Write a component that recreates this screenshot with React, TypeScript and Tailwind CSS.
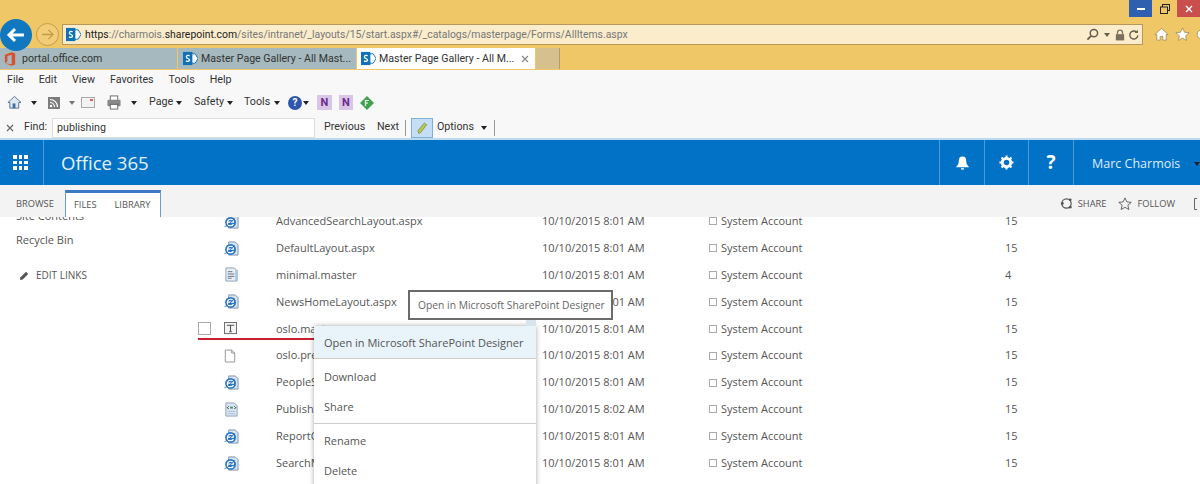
import React from "react";

const font = "font-['Open_Sans','Noto_Sans',sans-serif]";
const chrome = "font-['Roboto','Open_Sans',sans-serif]";

function SpLogo({ className = "" }: { className?: string }) {
  return (
    <svg viewBox="0 0 16 16" className={"w-[15px] h-[15px] shrink-0 " + className}>
      <path d="M8 3h5l3 5-3 5H8z" fill="#fff" stroke="#0f72b8" strokeWidth="1" />
      <rect x="0" y="1" width="10" height="14" fill="#0f72b8" />
      <path d="M7 5.2C6 4.4 3.6 4.5 3.6 6.3c0 2 3.4 1.4 3.4 3.3 0 1.6-2.5 1.7-3.7.9" fill="none" stroke="#fff" strokeWidth="1.4" />
    </svg>
  );
}

function IeDoc() {
  return (
    <svg viewBox="0 0 16 16" className="w-[15px] h-[15px]">
      <path d="M5 1h7l3 3v11H5z" fill="#d5e3f3" stroke="#7f93ab" strokeWidth="1" />
      <circle cx="7" cy="9" r="5.800" fill="#2b78c2" />
      <path d="M3.600 8.600h6.400c0-2-1.200-3-3-3-1.900 0-3.400 1.400-3.400 3.600 0 2.100 1.500 3.300 3.400 3.300 1.400 0 2.500-.6 3-1.700" fill="none" stroke="#fff" strokeWidth="1.300" />
      <path d="M.5 13.500c2-.2 7-3.900 10.500-9" fill="none" stroke="#1c5a9e" strokeWidth=".8" />
    </svg>
  );
}

function MasterDoc() {
  return (
    <svg viewBox="0 0 16 16" className="w-[15px] h-[15px]">
      <path d="M2 1h9l3 3v11H2z" fill="#e7eef7" stroke="#8ea0b5" strokeWidth="1" />
      <path d="M4 5h5M4 7.500h7M4 10h7M4 12h4" stroke="#5f6f82" strokeWidth="1" />
      <rect x="12" y="3" width="2.500" height="12" fill="#a9c5e4" />
    </svg>
  );
}

function OsloIcon() {
  return (
    <svg viewBox="0 0 14 14" className="w-[13px] h-[13px]">
      <rect x=".5" y=".5" width="13" height="12" fill="#f4f4f4" stroke="#666" strokeWidth="1" />
      <path d="M3 3.500h8M7 3.500v7" stroke="#555" strokeWidth="1.200" />
      <path d="M5.500 10.500h3" stroke="#555" strokeWidth="1" />
    </svg>
  );
}

function BlankDoc() {
  return (
    <svg viewBox="0 0 14 16" className="w-[12px] h-[14px]">
      <path d="M1.500 1h7.500l3.500 3.500V15h-11z" fill="#fff" stroke="#888" strokeWidth="1" />
      <path d="M9 1v3.500h3.500" fill="none" stroke="#888" strokeWidth="1" />
    </svg>
  );
}

function CodeDoc() {
  return (
    <svg viewBox="0 0 16 16" className="w-[15px] h-[15px]">
      <path d="M2 1h9l3 3v11H2z" fill="#dbe6f4" stroke="#8ea0b5" strokeWidth="1" />
      <path d="M5 4.500L3.500 6 5 7.500M11 4.500l1.500 1.500L11 7.500" fill="none" stroke="#333" strokeWidth="1" />
      <rect x="6.500" y="5" width="3" height="2" fill="#3d9a6b" />
      <path d="M4 10h8M4 12.500h8" stroke="#a9bcd3" strokeWidth="1" />
    </svg>
  );
}

function Caret({ className = "" }: { className?: string }) {
  return <span className={"inline-block w-0 h-0 border-x-[3.500px] border-x-transparent border-t-[4px] border-t-[#222] " + className} />;
}

const rows: { icon: React.ReactNode; name: string; date: string; v: string; check?: boolean }[] = [
  { icon: <IeDoc />, name: "AdvancedSearchLayout.aspx", date: "10/10/2015 8:01 AM", v: "15" },
  { icon: <IeDoc />, name: "DefaultLayout.aspx", date: "10/10/2015 8:01 AM", v: "15" },
  { icon: <MasterDoc />, name: "minimal.master", date: "10/10/2015 8:01 AM", v: "4" },
  { icon: <IeDoc />, name: "NewsHomeLayout.aspx", date: "10/10/2015 8:01 AM", v: "15" },
  { icon: <OsloIcon />, name: "oslo.master", date: "10/10/2015 8:01 AM", v: "15", check: true },
  { icon: <BlankDoc />, name: "oslo.preview", date: "10/10/2015 8:01 AM", v: "15" },
  { icon: <IeDoc />, name: "PeopleSearch.aspx", date: "10/10/2015 8:01 AM", v: "15" },
  { icon: <CodeDoc />, name: "Publishing.aspx", date: "10/10/2015 8:02 AM", v: "15" },
  { icon: <IeDoc />, name: "ReportCenter.aspx", date: "10/10/2015 8:01 AM", v: "15" },
  { icon: <IeDoc />, name: "SearchMain.aspx", date: "10/10/2015 8:01 AM", v: "15" },
];

function Tab({ w, bg, children }: { w: string; bg: string; children: React.ReactNode }) {
  return <div className={`${w} ${bg} h-[21px] flex items-center shrink-0 overflow-hidden`}>{children}</div>;
}

export default function App() {
  return (
    <div className={"relative w-[1200px] h-[484px] overflow-hidden bg-white flex flex-col text-[#555] " + font}>
      {/* Browser title region */}
      <div className={"h-[70px] bg-[#f0c766] relative shrink-0 " + chrome}>
        <div className="flex justify-end h-[17px]">
          <div className="w-[23px] h-[17px] bg-[#2f5fb0] flex items-center justify-center">
            <div className="w-[8px] h-[2px] bg-white" />
          </div>
          <div className="w-[25px] h-[17px] flex items-center justify-center">
            <svg viewBox="0 0 10 10" className="w-[10px] h-[10px]">
              <rect x="2.500" y=".5" width="7" height="6" fill="none" stroke="#222" />
              <rect x=".5" y="3" width="7" height="6.500" fill="#f0c766" stroke="#222" />
            </svg>
          </div>
          <div className="w-[23px] h-[17px] bg-[#c94f4f] flex items-center justify-center">
            <svg viewBox="0 0 8 8" className="w-[8px] h-[8px]"><path d="M1 1l6 6M7 1L1 7" stroke="#fff" strokeWidth="1.400" /></svg>
          </div>
        </div>
        <div className="flex items-center h-[21px] mt-[7px]">
          <div className="w-[62px] shrink-0" />
          <div className="w-[1081px] h-[21px] bg-[#fbeccb] border border-[#b9975a] flex items-center pl-[3px] pr-[2px] shrink-0">
            <SpLogo className="mr-[4px]" />
            <span className="text-[10.400px] text-[#777] whitespace-nowrap pt-[1px]">
              <span className="text-[#222]">https</span>://charmois.<span className="text-[#222]">sharepoint.com</span>/sites/intranet/_layouts/15/start.aspx#/_catalogs/masterpage/Forms/AllItems.aspx
            </span>
            <div className="ml-auto flex items-center gap-[3px]">
              <svg viewBox="0 0 14 14" className="w-[13px] h-[13px]">
                <circle cx="8.500" cy="5.500" r="4" fill="none" stroke="#665f4f" strokeWidth="1.600" />
                <path d="M5.500 8.500L1.500 12.500" stroke="#665f4f" strokeWidth="2" />
              </svg>
              <Caret className="mx-[2px] border-t-[#665f4f]" />
              <svg viewBox="0 0 12 14" className="w-[10px] h-[12px]">
                <path d="M3 6V4a3 3 0 0 1 6 0v2" fill="none" stroke="#7a705c" strokeWidth="1.500" />
                <rect x="1" y="6" width="10" height="7.500" fill="#7a705c" />
              </svg>
              <svg viewBox="0 0 14 14" className="w-[12px] h-[12px]">
                <path d="M11.500 7.500a4.700 4.700 0 1 1-1.500-4" fill="none" stroke="#665f4f" strokeWidth="1.600" />
                <path d="M11.500 .8v4h-4z" fill="#665f4f" />
              </svg>
            </div>
          </div>
          <div className="ml-[11px] flex items-center gap-[6px]">
            <svg viewBox="0 0 16 16" className="w-[15px] h-[15px]">
              <path d="M8 1.500L1 8h2v6h3.500v-4h3v4H13V8h2z" fill="#fff" stroke="#8a7a52" strokeWidth=".7" />
            </svg>
            <svg viewBox="0 0 16 16" className="w-[15px] h-[15px]">
              <path d="M8 1l2.100 4.600 5 .5-3.800 3.300 1.100 4.900L8 11.800l-4.400 2.500 1.100-4.900L.9 6.100l5-.5z" fill="#fff" stroke="#8a7a52" strokeWidth=".7" />
            </svg>
            <svg viewBox="0 0 8 16" className="w-[8px] h-[15px]">
              <circle cx="6" cy="8" r="5" fill="#fff" stroke="#8a7a52" strokeWidth=".7" />
            </svg>
          </div>
        </div>
        <div className="flex items-end gap-[1px] h-[21px] mt-[3px] text-[10.600px] whitespace-nowrap">
          <Tab w="w-[177px]" bg="bg-[#a5b9be]">
            <svg viewBox="0 0 14 16" className="w-[12px] h-[14px] ml-[4px] mr-[6px] shrink-0">
              <path d="M1 3l8-3 4 1.500v13L9 16l-8-3 8 1V3L4 4.500V11l-3 2z" fill="#d9502a" />
            </svg>
            <span className="text-[#333] pt-[1px]">portal.office.com</span>
          </Tab>
          <Tab w="w-[178px]" bg="bg-[#a5b9be]">
            <SpLogo className="ml-[5px] mr-[3px]" />
            <span className="text-[#333] pt-[1px]">Master Page Gallery - All Mast...</span>
          </Tab>
          <Tab w="w-[178px]" bg="bg-white">
            <SpLogo className="ml-[4px] mr-[3px]" />
            <span className="text-[#333] pt-[1px]">Master Page Gallery - All M...</span>
            <svg viewBox="0 0 8 8" className="w-[8px] h-[8px] ml-auto mr-[6px]"><path d="M1 1l6 6M7 1L1 7" stroke="#888" strokeWidth="1.200" /></svg>
          </Tab>
          <div className="w-[24px] h-[21px] bg-[#d6c08e] border-r border-[#b39c62]" />
        </div>

        {/* Back / forward buttons lie over the address row */}
        <div className="absolute left-0 top-[19px] w-[32px] h-[32px] rounded-full bg-[#0f78c0] flex items-center justify-center">
          <svg viewBox="0 0 20 16" className="w-[20px] h-[16px]">
            <path d="M9 2L3 8l6 6M3 8h15" fill="none" stroke="#fff" strokeWidth="3" />
          </svg>
        </div>
        <div className="absolute left-[36px] top-[23px] w-[23px] h-[23px] rounded-full border border-[#c49a52] bg-[#f3cd75] flex items-center justify-center">
          <svg viewBox="0 0 14 12" className="w-[13px] h-[11px]">
            <path d="M8 1l5 5-5 5M13 6H1" fill="none" stroke="#c49a52" strokeWidth="1.400" />
          </svg>
        </div>
      </div>

      {/* Menu / command / find */}
      <div className={"h-[70px] bg-[#f8f8f8] border-b-2 border-[#bcd9ee] shrink-0 text-[10.700px] text-[#333] flex flex-col " + chrome}>
        <div className="flex gap-[15px] pl-[7px] h-[20px] items-center">
          {["File", "Edit", "View", "Favorites", "Tools", "Help"].map((m) => (
            <span key={m}>{m}</span>
          ))}
        </div>
        <div className="flex items-center h-[25px] pl-[7px]">
          <svg viewBox="0 0 16 16" className="w-[15px] h-[15px]">
            <path d="M8 1.500L1 8h2v6h9.500V8H15z" fill="#dfe7f1" stroke="#56708f" />
            <rect x="6" y="9" width="3" height="5" fill="#3d6fa8" />
          </svg>
          <Caret className="ml-[9px]" />
          <svg viewBox="0 0 12 12" className="w-[12px] h-[12px] ml-[11px]">
            <rect width="12" height="12" fill="#7d7d7d" />
            <circle cx="3" cy="9" r="1.200" fill="#fff" />
            <path d="M2 5.500a4.500 4.500 0 0 1 4.500 4.500M2 2.500A7.500 7.500 0 0 1 9.500 10" fill="none" stroke="#fff" strokeWidth="1.200" />
          </svg>
          <Caret className="ml-[9px] border-t-[#777]" />
          <svg viewBox="0 0 14 11" className="w-[14px] h-[11px] ml-[6px]">
            <rect x=".5" y=".5" width="13" height="10" fill="#f2f2f2" stroke="#aaa" />
            <rect x="9" y="2" width="3" height="2" fill="#d06a5c" />
          </svg>
          <svg viewBox="0 0 16 16" className="w-[16px] h-[15px] ml-[11px]">
            <rect x="4" y="1" width="8" height="5" fill="#fff" stroke="#666" />
            <rect x="1" y="5" width="14" height="7" rx="1" fill="#888" />
            <rect x="4" y="10" width="8" height="5" fill="#fff" stroke="#666" />
          </svg>
          <Caret className="ml-[9px]" />
          <span className="ml-[12px] w-[26px]">Page</span>
          <Caret className="ml-[1px]" />
          <span className="ml-[12px] w-[32px]">Safety</span>
          <Caret className="ml-[1px]" />
          <span className="ml-[11px] w-[27px]">Tools</span>
          <Caret className="ml-[3px]" />
          <span className="ml-[8px] w-[14px] h-[14px] rounded-full bg-[#2f56ac] text-white text-[10px] leading-[14px] text-center font-bold">?</span>
          <Caret className="ml-[1px]" />
          <span className="ml-[8px] w-[15px] h-[15px] bg-[#d9c5e6] text-[#6b2a8a] text-[11px] leading-[15px] text-center font-bold">N</span>
          <span className="ml-[7px] w-[14px] h-[15px] bg-[#d9c5e6] text-[#6b2a8a] text-[11px] leading-[15px] text-center font-bold">N</span>
          <svg viewBox="0 0 14 14" className="w-[14px] h-[14px] ml-[7px]">
            <path d="M7 0l7 7-7 7-7-7z" fill="#3fa34d" />
            <path d="M5.500 10V4.500h3.500M5.500 7h2.500" fill="none" stroke="#fff" strokeWidth="1.200" />
          </svg>
        </div>
        <div className="flex items-center h-[21px] pl-[6px] mt-[2px]">
          <svg viewBox="0 0 8 8" className="w-[8px] h-[8px]"><path d="M1 1l6 6M7 1L1 7" stroke="#666" strokeWidth="1.200" /></svg>
          <span className="w-[28px] ml-[10px]">Find:</span>
          <div className="w-[263px] h-[20px] bg-white border border-[#ddd] pl-[4px] leading-[18px]">publishing</div>
          <span className="ml-[9px] w-[42px]">Previous</span>
          <span className="ml-[11px] w-[22px]">Next</span>
          <div className="w-px h-[16px] bg-[#999] ml-[6px]" />
          <div className="w-[22px] h-[20px] bg-[#c5def5] border border-[#7fb0d8] ml-[5px] flex items-center justify-center">
            <svg viewBox="0 0 14 14" className="w-[13px] h-[14px]">
              <path d="M3 13l-1-3L9 1.500l2.500 2L5 12z" fill="#b4c94f" stroke="#77823a" strokeWidth=".7" />
            </svg>
          </div>
          <span className="ml-[4px] w-[40px]">Options</span>
          <Caret className="ml-[4px]" />
          <div className="w-px h-[16px] bg-[#999] ml-[7px]" />
        </div>
      </div>

      {/* Office 365 bar */}
      <div className="h-[45px] bg-[#0272c6] shrink-0 flex items-stretch text-white">
        <div className="w-[44px] border-r border-[#4c9bd8] flex items-center justify-center">
          <div className="grid grid-cols-3 gap-[2px] ml-[-2px]">
            {Array.from({ length: 9 }).map((_, i) => (
              <div key={i} className="w-[3.500px] h-[3.500px] bg-white" />
            ))}
          </div>
        </div>
        <div className="pl-[17px] text-[18.600px] leading-[45px] text-[#e4f1fb]">Office 365</div>
        <div className="ml-auto flex items-stretch">
          <div className="w-[45px] border-l border-[#4c9bd8] flex items-center justify-center">
            <svg viewBox="0 0 16 16" className="w-[15px] h-[16px]">
              <path d="M8 1c-3 0-4 2-4 5 0 3-1 4-2.500 5.500v1h13v-1C13 10 12 9 12 6c0-3-1-5-4-5z" fill="#fff" />
              <path d="M6.500 13.500h3v1.500h-3z" fill="#fff" />
            </svg>
          </div>
          <div className="w-[44px] border-l border-[#4c9bd8] flex items-center justify-center">
            <svg viewBox="0 0 16 16" className="w-[15px] h-[15px]">
              <circle cx="8" cy="8" r="4.500" fill="none" stroke="#fff" strokeWidth="3" />
              <path d="M8 0.500v3M8 12.500v3M.5 8h3M12.500 8h3M2.700 2.700l2.100 2.100M11.200 11.200l2.100 2.100M2.700 13.300l2.100-2.100M11.200 4.800l2.100-2.100" stroke="#fff" strokeWidth="2.200" />
            </svg>
          </div>
          <div className="w-[45px] border-l border-[#4c9bd8] flex items-center justify-center text-[19px] font-bold">?</div>
          <div className="w-[127px] border-l border-[#4c9bd8] pl-[18px] pt-[3px] flex items-center text-[12.500px] whitespace-nowrap text-[#dcedfa]">
            Marc Charmois
            <Caret className="ml-[14px] shrink-0 border-t-[#9cc9ea]" />
          </div>
        </div>
      </div>

      {/* Ribbon */}
      <div className="h-[32px] bg-[#f3f3f3] shrink-0 flex items-end text-[9.300px] text-[#555] whitespace-nowrap z-10">
        <span className="pl-[16px] w-[65px] h-[27px] leading-[28px]">BROWSE</span>
        <div className="flex w-[96px] h-[27px] bg-white border-x border-[#6d9bd1] border-t-[3px] border-t-[#3f78c4] leading-[24px]">
          <span className="pl-[8px]">FILES</span>
          <span className="pl-[18px]">LIBRARY</span>
        </div>
        <div className="ml-auto flex items-center h-[27px] gap-[5px] mr-[-4px]">
          <svg viewBox="0 0 14 14" className="w-[13px] h-[13px]">
            <circle cx="7" cy="7" r="5" fill="none" stroke="#555" strokeWidth="1.300" />
            <circle cx="11" cy="3" r="1.500" fill="#555" />
            <circle cx="2.500" cy="7" r="1.500" fill="#555" />
            <circle cx="11" cy="11" r="1.500" fill="#555" />
          </svg>
          <span>SHARE</span>
          <svg viewBox="0 0 16 16" className="w-[14px] h-[14px] ml-[7px]">
            <path d="M8 1l2.100 4.600 5 .5-3.800 3.300 1.100 4.900L8 11.800l-4.400 2.500 1.100-4.900L.9 6.100l5-.5z" fill="none" stroke="#555" />
          </svg>
          <span>FOLLOW</span>
          <svg viewBox="0 0 10 12" className="w-[10px] h-[12px] ml-[14px]">
            <path d="M3 .5H.5v11H3M7 .5h3M7 11.500h3" fill="none" stroke="#666" />
          </svg>
        </div>
      </div>

      {/* Body */}
      <div className="flex-1 min-h-0 overflow-hidden flex relative text-[11px] whitespace-nowrap">
        <div className="w-[198px] shrink-0 pl-[16px] mt-[-8px] flex flex-col">
          <div className="h-[13px] leading-[13px]">Site Contents</div>
          <div className="mt-[8px] h-[20px] leading-[20px]">Recycle Bin</div>
          <div className="mt-[15px] flex items-center gap-[6px] text-[10px] pl-[3px] h-[20px]">
            <svg viewBox="0 0 12 12" className="w-[11px] h-[11px]">
              <path d="M1 11l.7-3 6-6 2.300 2.300-6 6z" fill="#555" />
            </svg>
            EDIT LINKS
          </div>
        </div>
        <div className="flex-1 flex flex-col mt-[-9.250px]">
          {rows.map((r) => (
            <div key={r.name} className="flex items-center h-[26.900px] shrink-0">
              <div className="w-[26px] shrink-0">
                {r.check && <div className="w-[13px] h-[13px] border border-[#aaa] bg-white" />}
              </div>
              <div className="w-[52px] shrink-0 flex items-center">{r.icon}</div>
              <div className="w-[266px] shrink-0 overflow-hidden">{r.name}</div>
              <div className="w-[167px] shrink-0">{r.date}</div>
              <div className="flex items-center gap-[4px] w-[296px] shrink-0">
                <div className="w-[8px] h-[8px] border border-[#aaa]" />
                System Account
              </div>
              <div>{r.v}</div>
            </div>
          ))}
        </div>

        {/* red underline */}
        <div className="absolute left-[198px] top-[121px] w-[124px] h-[2px] bg-[#c8202f]" />

        {/* Tooltip */}
        <div className="absolute left-[408px] top-[73px] w-[205px] h-[30px] bg-white border-2 border-[#6b6b6b] text-[#666] text-[10.300px] leading-[26px] pl-[8px]">
          Open in Microsoft SharePoint Designer
        </div>

        {/* Context menu */}
        <div className="absolute left-[314px] top-[109px] w-[222px] h-[170px] bg-white shadow-[0_0_5px_rgba(0,0,0,0.35)] text-[11px]">
          <div className="h-[33px] bg-[#e8f3fa] border-b border-[#ccc] pl-[10px] leading-[33px]">Open in Microsoft SharePoint Designer</div>
          <div className="h-[32px] pl-[10px] leading-[34px] mt-[1px]">Download</div>
          <div className="h-[30px] pl-[10px] leading-[30px]">Share</div>
          <div className="h-px bg-[#ccc] mt-[1px]" />
          <div className="h-[32px] pl-[10px] leading-[34px]">Rename</div>
          <div className="h-[30px] pl-[10px] leading-[30px]">Delete</div>
        </div>
        <div className="absolute left-[526px] top-[103px] w-[10px] h-[6px] bg-[#d8e4ee]" />
      </div>
    </div>
  );
}
